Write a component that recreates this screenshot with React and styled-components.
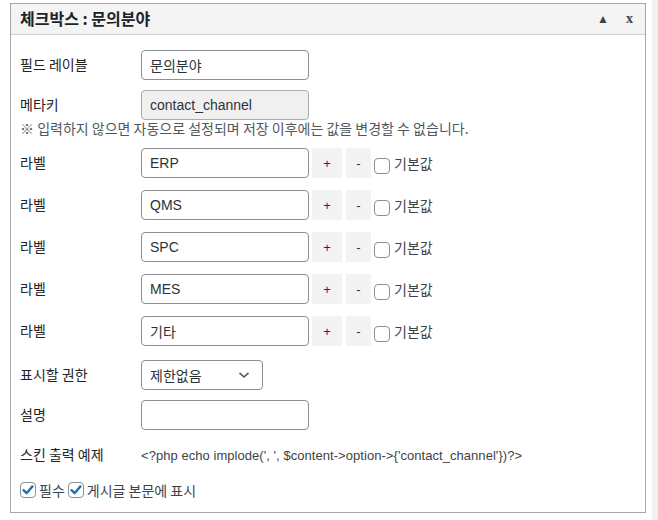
import React from 'react'
import styled, { createGlobalStyle } from 'styled-components'

const font = `"Liberation Sans", "Noto Sans CJK KR", sans-serif`
const ko = `"Noto Sans CJK KR", sans-serif`

const GlobalStyle = createGlobalStyle`
  html, body {
    margin: 0;
    padding: 0;
    background: #fff;
  }
  body {
    font-family: ${ font };
    font-size: 13px;
    color: #1d2327;
  }
`

const labels = [ 'ERP', 'QMS', 'SPC', 'MES', '기타' ]

const Page = styled.div`
  display: flex;
  width: 658px;
  height: 520px;
`

const Main = styled.div`
  flex: 1;
  padding: 3px 6px 0 10px;
`

const Strip = styled.div`
  width: 6px;
  background: #f0f0f1;
`

const Panel = styled.div`
  width: 636px;
  height: 510px;
  box-sizing: border-box;
  border: 1px solid #a7a7a7;
  background: #fff;
`

const Header = styled.div`
  display: flex;
  align-items: center;
  height: 30px;
  padding: 0 12px 0 9px;
  background: #f4f4f4;
  border-bottom: 1px solid #cfcfcf;
`

const Title = styled.h3`
  flex: 1;
  margin: 0 0 2px;
  font-family: ${ ko };
  font-size: 16px;
  font-weight: 700;
  color: #1d2327;
`

const HeaderTool = styled.span`
  color: #3c434a;
  font-size: ${ p => p.size || 10 }px;
  font-weight: 700;
  font-family: ${ p => p.serif ? '"Liberation Serif", serif' : font };
  margin-left: ${ p => p.gap || 0 }px;
`

const Body = styled.div`
  padding: 15px 9px 0 9px;
`

const Row = styled.div`
  display: flex;
  align-items: center;
  min-height: 30px;
  margin-bottom: ${ p => p.mb ?? 10 }px;
`

const Label = styled.div`
  width: 121px;
  flex: none;
  padding-bottom: 3px;
  font-family: ${ ko };
  font-size: 14px;
  color: #1d2327;
`

const Input = styled.div`
  box-sizing: border-box;
  width: ${ p => p.w || 168 }px;
  height: 30px;
  display: flex;
  align-items: center;
  padding: 0 8px;
  border: 1px solid #8c8f94;
  border-radius: 4px;
  background: ${ p => p.disabled ? '#f0f0f1' : '#fff' };
  border-color: ${ p => p.disabled ? '#a8abaf' : '#8c8f94' };
  color: #2c3338;
  font-family: ${ p => p.ko ? ko : font };
  font-size: 14px;
`

const Note = styled.div`
  font-family: ${ ko };
  font-size: 14px;
  line-height: 16px;
  color: #50575e;
  margin: 0 0 12px;
`

const SmallButton = styled.div`
  width: ${ p => p.w }px;
  height: 30px;
  display: flex;
  align-items: center;
  justify-content: center;
  margin-left: ${ p => p.ml }px;
  background: #f3f3f3;
  color: #3c1f5e;
  font-size: 13px;
`

const Check = styled.span`
  display: inline-flex;
  align-items: center;
  justify-content: center;
  width: 16px;
  height: 16px;
  box-sizing: border-box;
  flex: none;
  border: 1px solid #8c8f94;
  border-radius: 4px;
  background: #fff;
  margin: ${ p => p.m || '0' };
`

const CheckText = styled.span`
  font-family: ${ ko };
  font-size: 14px;
  color: #3c434a;
  margin-left: ${ p => p.ml || 4 }px;
`

const Select = styled(Input)`
  justify-content: space-between;
  padding: 0 12px 0 8px;
`

const Code = styled.div`
  font-size: 13px;
  letter-spacing: 0.05px;
  color: #3c434a;
`

const CheckRow = styled.div`
  display: flex;
  align-items: center;
  margin-top: 10px;
`

const Tick = () => (
  <svg width="14" height="14" viewBox="0 0 14 14">
    <path d="M2.5 7.2 L5.6 10.2 L11.4 3.4" fill="none" stroke="#2271b1" strokeWidth="2.4" strokeLinecap="round" strokeLinejoin="round" />
  </svg>
)

const Chevron = () => (
  <svg width="12" height="8" viewBox="0 0 12 8">
    <path d="M1.5 1.8 L6 6 L10.5 1.8" fill="none" stroke="#50575e" strokeWidth="1.6" />
  </svg>
)

const App = () => (
  <Page>
    <GlobalStyle />
    <Main>
      <Panel>
        <Header>
          <Title>체크박스 : 문의분야</Title>
          <HeaderTool size={ 12 }>▲</HeaderTool>
          <HeaderTool serif size={ 14 } gap={ 17 }>x</HeaderTool>
        </Header>
        <Body>
          <Row>
            <Label>필드 레이블</Label>
            <Input ko>문의분야</Input>
          </Row>
          <Row mb={ 0 }>
            <Label>메타키</Label>
            <Input disabled>contact_channel</Input>
          </Row>
          <Note>※ 입력하지 않으면 자동으로 설정되며 저장 이후에는 값을 변경할 수 없습니다.</Note>
          { labels.map((l, i) => (
            <Row key={ l } mb={ i === labels.length - 1 ? 14 : 12 }>
              <Label>라벨</Label>
              <Input ko={ l === '기타' }>{ l }</Input>
              <SmallButton w={ 30 } ml={ 3 }>+</SmallButton>
              <SmallButton w={ 25 } ml={ 4 }>-</SmallButton>
              <Check m="6px 0 0 3px" />
              <CheckText>기본값</CheckText>
            </Row>
          )) }
          <Row mb={ 10 }>
            <Label>표시할 권한</Label>
            <Select ko w={ 122 }>
              <span>제한없음</span>
              <Chevron />
            </Select>
          </Row>
          <Row mb={ 10 }>
            <Label>설명</Label>
            <Input />
          </Row>
          <Row mb={ 0 }>
            <Label>스킨 출력 예제</Label>
            <Code>&lt;?php echo implode(', ', $content-&gt;option-&gt;{'{'}'contact_channel'{'}'})?&gt;</Code>
          </Row>
          <CheckRow>
            <Check><Tick /></Check>
            <CheckText ml={ 3 }>필수</CheckText>
            <Check m="0 0 0 3px"><Tick /></Check>
            <CheckText ml={ 3 }>게시글 본문에 표시</CheckText>
          </CheckRow>
        </Body>
      </Panel>
    </Main>
    <Strip />
  </Page>
)

export default App
